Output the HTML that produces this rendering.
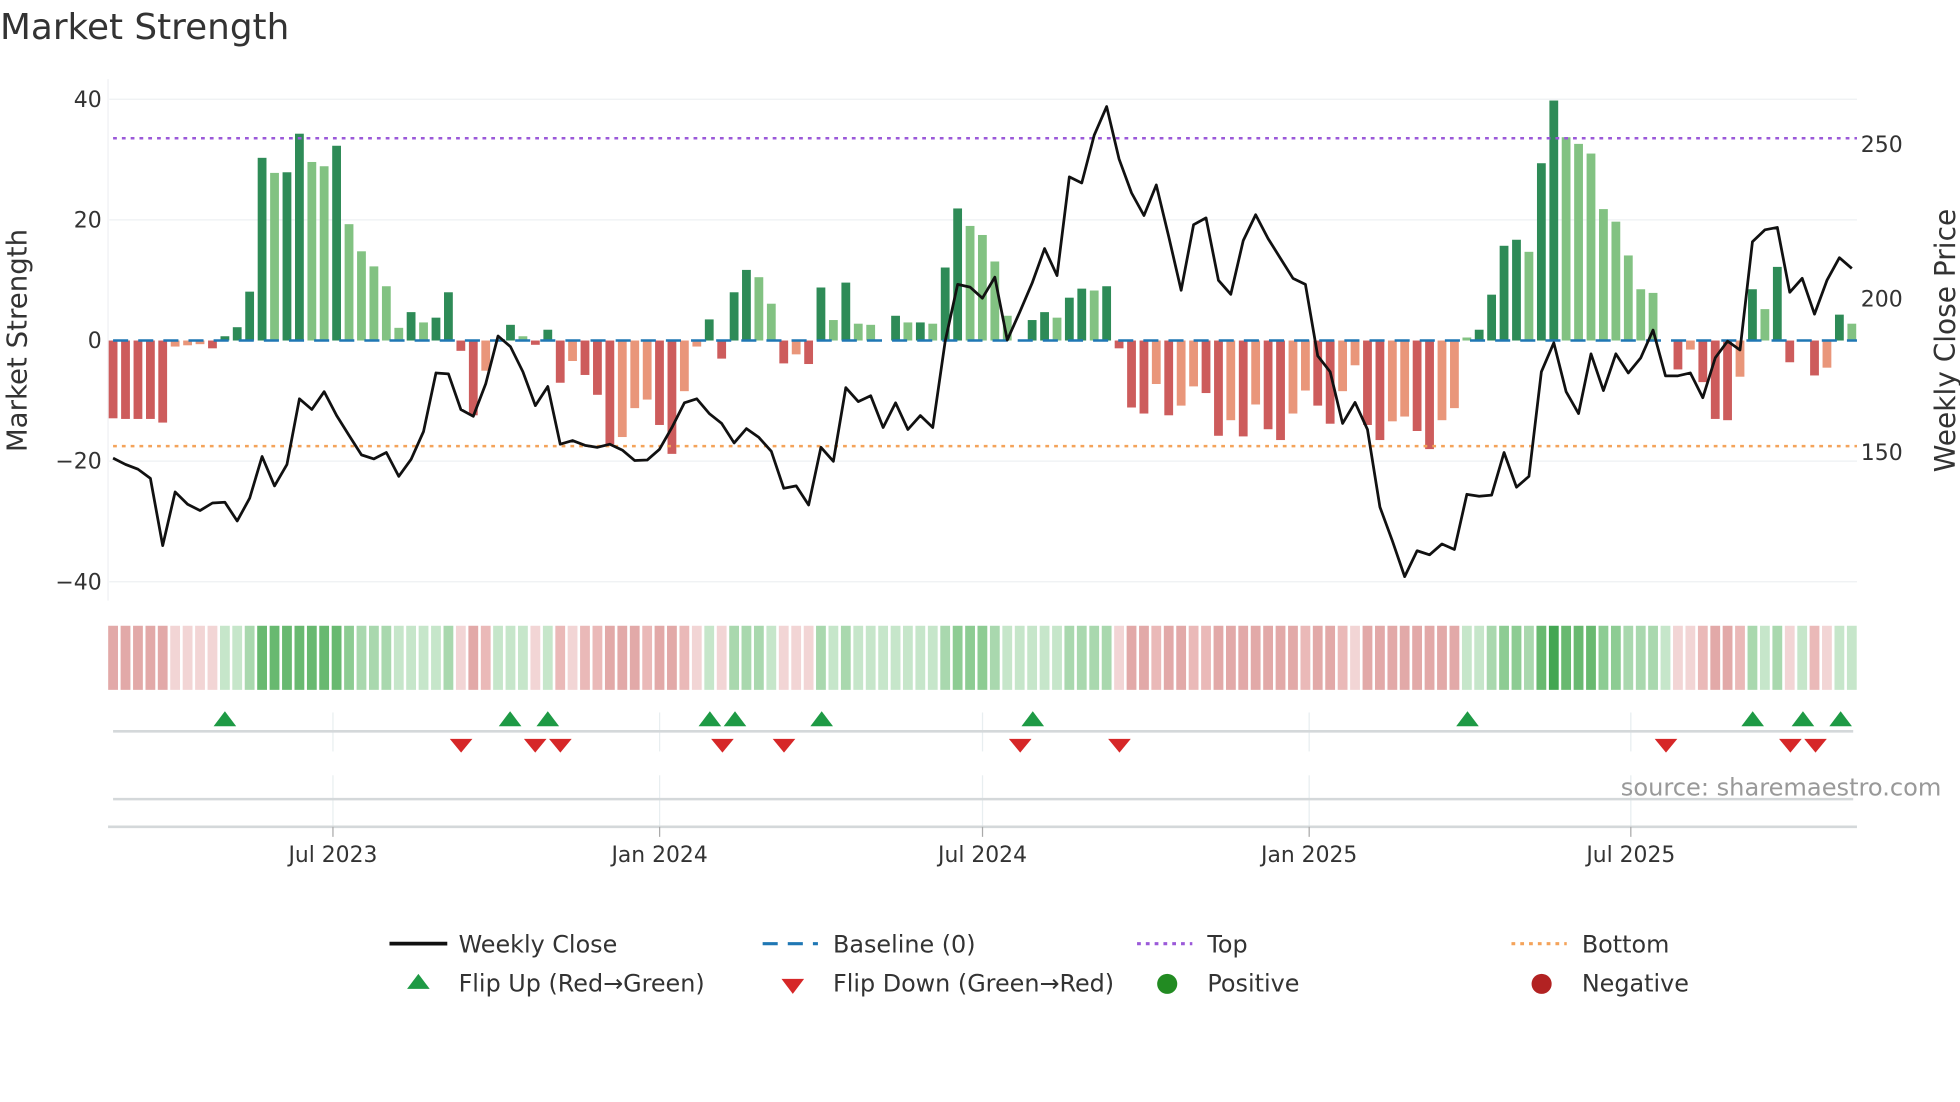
<!DOCTYPE html>
<html><head><meta charset="utf-8"><style>
html,body{margin:0;padding:0;background:#fff;overflow:hidden}
svg{display:block}
text{font-family:"DejaVu Sans","Liberation Sans",sans-serif}
</style></head><body>
<svg id="s" width="1960" height="1102" viewBox="0 0 1560 877" preserveAspectRatio="none" xmlns="http://www.w3.org/2000/svg">
<rect width="1560" height="877" fill="#fff"/>
<text x="0" y="31" font-size="28.5" fill="#333">Market Strength</text>
<g stroke="#eef0f3" stroke-width="1">
<line x1="87" y1="79" x2="1478" y2="79"/><line x1="87" y1="175" x2="1478" y2="175"/>
<line x1="87" y1="367" x2="1478" y2="367"/><line x1="87" y1="463" x2="1478" y2="463"/>
</g>
<line x1="86" y1="63" x2="86" y2="478" stroke="#eef0f3"/>
<g font-size="17.5" fill="#333" text-anchor="end">
<text x="81" y="85">40</text><text x="81" y="181">20</text><text x="81" y="277">0</text>
<text x="81" y="373">−20</text><text x="81" y="469">−40</text>
</g>
<g font-size="17.5" fill="#333">
<text x="1481" y="121">250</text><text x="1481" y="244">200</text><text x="1481" y="366">150</text>
</g>
<text transform="translate(21,271) rotate(-90)" font-size="22" fill="#333" text-anchor="middle">Market Strength</text>
<text transform="translate(1556,271) rotate(-90)" font-size="22.3" fill="#333" text-anchor="middle">Weekly Close Price</text>
<g id="bars"></g>
<line x1="90" y1="271" x2="1478" y2="271" stroke="#1f77b4" stroke-width="2" stroke-dasharray="12,8"/>
<line x1="90" y1="110" x2="1478" y2="110" stroke="#9b59d9" stroke-width="2" stroke-dasharray="3,4"/>
<line x1="90" y1="355" x2="1478" y2="355" stroke="#f4a35a" stroke-width="2" stroke-dasharray="3,4"/>
<polyline id="price" fill="none" stroke="#111" stroke-width="2.2" stroke-linejoin="round"/>
<g id="strip"></g>
<g stroke="#e8eef0" stroke-width="1">
<line x1="265" y1="567" x2="265" y2="598"/><line x1="525" y1="567" x2="525" y2="598"/><line x1="782" y1="567" x2="782" y2="598"/><line x1="1042" y1="567" x2="1042" y2="598"/><line x1="1298" y1="567" x2="1298" y2="598"/>
<line x1="265" y1="617" x2="265" y2="658"/><line x1="525" y1="617" x2="525" y2="658"/><line x1="782" y1="617" x2="782" y2="658"/><line x1="1042" y1="617" x2="1042" y2="658"/><line x1="1298" y1="617" x2="1298" y2="658"/>
</g>
<line x1="90" y1="582" x2="1475" y2="582" stroke="#d4d8da" stroke-width="2"/>
<line x1="90" y1="636" x2="1475" y2="636" stroke="#d4d8da" stroke-width="2"/>
<line x1="86" y1="658" x2="1478" y2="658" stroke="#d4d8da" stroke-width="2"/>
<g stroke="#aaa"><line x1="265" y1="658" x2="265" y2="666"/><line x1="525" y1="658" x2="525" y2="666"/><line x1="782" y1="658" x2="782" y2="666"/><line x1="1042" y1="658" x2="1042" y2="666"/><line x1="1298" y1="658" x2="1298" y2="666"/></g>
<g font-size="17.4" fill="#333" text-anchor="middle">
<text x="265" y="686">Jul 2023</text><text x="525" y="686">Jan 2024</text><text x="782" y="686">Jul 2024</text><text x="1042" y="686">Jan 2025</text><text x="1298" y="686">Jul 2025</text>
</g>
<g id="tri"></g>
<text x="1290" y="633" font-size="19.2" fill="#999">source: sharemaestro.com</text>
<g font-size="19" fill="#333">
<line x1="310" y1="751" x2="356" y2="751" stroke="#111" stroke-width="3"/>
<text x="365" y="758">Weekly Close</text>
<line x1="607" y1="751" x2="651" y2="751" stroke="#1f77b4" stroke-width="2.5" stroke-dasharray="12,8"/>
<text x="663" y="758">Baseline (0)</text>
<line x1="905" y1="751" x2="949" y2="751" stroke="#9b59d9" stroke-width="2.5" stroke-dasharray="3,4"/>
<text x="961" y="758">Top</text>
<line x1="1203" y1="751" x2="1247" y2="751" stroke="#f4a35a" stroke-width="2.5" stroke-dasharray="3,4"/>
<text x="1259" y="758">Bottom</text>
<polygon points="324,787 342,787 333,775" fill="#1e9a45"/>
<text x="365" y="789">Flip Up (Red→Green)</text>
<polygon points="622,779 640,779 631,791" fill="#d62728"/>
<text x="663" y="789">Flip Down (Green→Red)</text>
<circle cx="929" cy="783" r="8" fill="#228b22"/>
<text x="961" y="789">Positive</text>
<circle cx="1227" cy="783" r="8" fill="#b22222"/>
<text x="1259" y="789">Negative</text>
</g>
</svg>
<script>
var V=[[-12.9,'DR'],[-13,'DR'],[-13,'DR'],[-13,'DR'],[-13.6,'DR'],[-1,'LR'],[-0.8,'LR'],[-0.6,'LR'],[-1.3,'DR'],[0.7,'DG'],[2.2,'DG'],[8.1,'DG'],[30.3,'DG'],[27.8,'LG'],[27.9,'DG'],[34.3,'DG'],[29.6,'LG'],[28.9,'LG'],[32.3,'DG'],[19.3,'LG'],[14.8,'LG'],[12.3,'LG'],[9,'LG'],[2.1,'LG'],[4.7,'DG'],[3,'LG'],[3.8,'DG'],[8,'DG'],[-1.7,'DR'],[-12.4,'DR'],[-5,'LR'],[0,'DG'],[2.6,'DG'],[0.7,'LG'],[-0.7,'DR'],[1.8,'DG'],[-7,'DR'],[-3.4,'LR'],[-5.7,'DR'],[-9,'DR'],[-17.2,'DR'],[-16,'LR'],[-11.2,'LR'],[-9.8,'LR'],[-14,'DR'],[-18.8,'DR'],[-8.4,'LR'],[-1,'LR'],[3.5,'DG'],[-3,'DR'],[8,'DG'],[11.7,'DG'],[10.5,'LG'],[6.1,'LG'],[-3.8,'DR'],[-2.3,'LR'],[-3.9,'DR'],[8.8,'DG'],[3.4,'LG'],[9.6,'DG'],[2.8,'LG'],[2.6,'LG'],[0,'DG'],[4.1,'DG'],[3,'LG'],[3,'DG'],[2.8,'LG'],[12.1,'DG'],[21.9,'DG'],[19,'LG'],[17.5,'LG'],[13.1,'LG'],[4.1,'LG'],[0,'LG'],[3.4,'DG'],[4.7,'DG'],[3.8,'LG'],[7.1,'DG'],[8.6,'DG'],[8.3,'LG'],[9,'DG'],[-1.3,'DR'],[-11.1,'DR'],[-12.1,'DR'],[-7.2,'LR'],[-12.4,'DR'],[-10.8,'LR'],[-7.6,'LR'],[-8.7,'DR'],[-15.8,'DR'],[-13.2,'LR'],[-15.9,'DR'],[-10.6,'LR'],[-14.7,'DR'],[-16.5,'DR'],[-12.1,'LR'],[-8.3,'LR'],[-10.8,'DR'],[-13.8,'DR'],[-8.4,'LR'],[-4.1,'LR'],[-14,'DR'],[-16.5,'DR'],[-13.4,'LR'],[-12.6,'LR'],[-15,'DR'],[-18,'DR'],[-13.2,'LR'],[-11.2,'LR'],[0.5,'LG'],[1.8,'DG'],[7.6,'DG'],[15.7,'DG'],[16.7,'DG'],[14.7,'LG'],[29.4,'DG'],[39.8,'DG'],[33.7,'LG'],[32.6,'LG'],[31,'LG'],[21.8,'LG'],[19.7,'LG'],[14.1,'LG'],[8.5,'LG'],[7.9,'LG'],[0,'LG'],[-4.8,'DR'],[-1.5,'LR'],[-6.9,'DR'],[-13,'DR'],[-13.2,'DR'],[-6,'LR'],[8.5,'DG'],[5.2,'LG'],[12.2,'DG'],[-3.6,'DR'],[0,'DR'],[-5.8,'DR'],[-4.5,'LR'],[4.3,'DG'],[2.8,'LG']];
var P=[1152,1168,1180,1203,1372,1237,1268,1284,1265,1263,1310,1253,1148,1222,1168,1003,1030,985,1045,1095,1144,1154,1138,1198,1155,1085,938,940,1030,1047,965,845,872,935,1020,972,1117,1108,1120,1125,1117,1132,1158,1157,1130,1075,1013,1003,1040,1065,1114,1078,1100,1135,1228,1222,1270,1125,1160,975,1010,995,1075,1013,1080,1045,1075,858,715,722,750,697,855,785,712,625,693,445,460,340,268,400,485,542,465,595,730,565,548,705,740,605,540,600,650,700,715,895,935,1065,1012,1080,1275,1360,1450,1385,1395,1368,1382,1243,1248,1245,1138,1225,1198,935,862,985,1040,890,982,890,938,900,830,945,945,938,1000,900,858,880,608,578,572,735,700,790,705,648,675];
var C={DG:'#2e8b57',LG:'#82c282',DR:'#cd5c5c',LR:'#e9967a'};
function sc(v){if(v>=35)return'#43a652';if(v>=25)return'#68b970';if(v>=15)return'#8dcc93';if(v>=7)return'#a9d8ae';if(v>=0)return'#c6e6ca';if(v<=-10)return'#e2a9a8';if(v<=-5)return'#eab9b8';return'#f2d5d5';}
var b='',s='',pts=[],dx=9.885;
for(var i=0;i<V.length;i++){var x=90+dx*i,v=V[i][0],h=Math.abs(v)*4.8;
if(v!=0)b+='<rect x="'+(x-3.5).toFixed(1)+'" y="'+(v>0?271-h:271).toFixed(1)+'" width="7" height="'+h.toFixed(1)+'" fill="'+C[V[i][1]]+'"/>';
s+='<rect x="'+(x-3.9).toFixed(1)+'" y="498" width="7.8" height="51" fill="'+sc(v)+'"/>';
pts.push(x.toFixed(1)+','+(P[i]/3.16).toFixed(1));}
document.getElementById('bars').innerHTML=b;
document.getElementById('strip').innerHTML=s;
document.getElementById('price').setAttribute('points',pts.join(' '));
var up=[179,406,436,565,585,654,822,1168,1395,1435,1465],dn=[367,426,446,575,624,812,891,1326,1425,1445],t='';
up.forEach(function(x){t+='<polygon points="'+(x-9)+',578 '+(x+9)+',578 '+x+',566" fill="#1e9a45"/>';});
dn.forEach(function(x){t+='<polygon points="'+(x-9)+',588 '+(x+9)+',588 '+x+',599" fill="#d62728"/>';});
document.getElementById('tri').innerHTML=t;
</script>
</body></html>
